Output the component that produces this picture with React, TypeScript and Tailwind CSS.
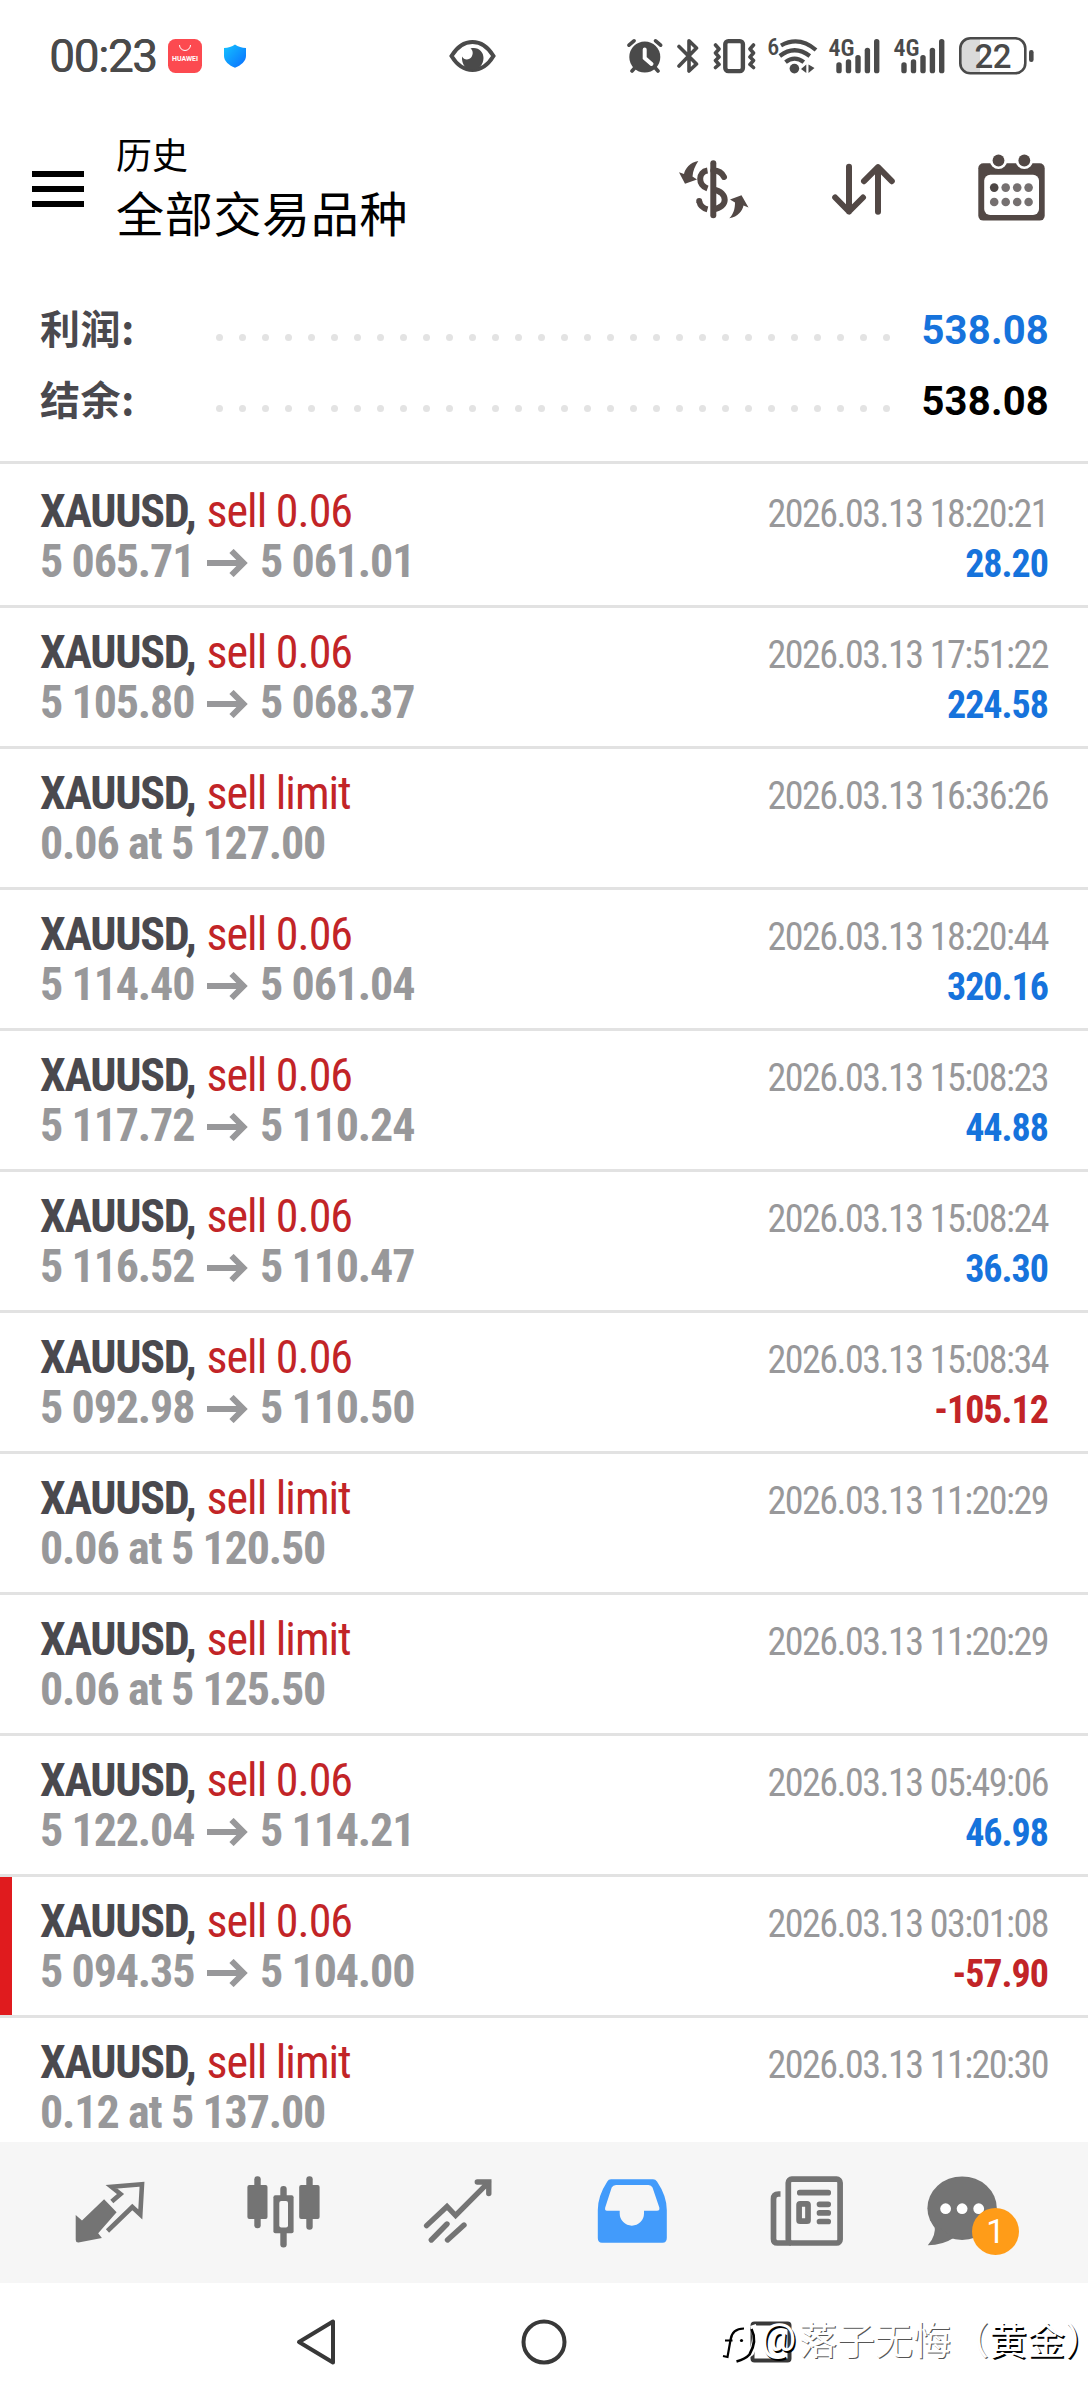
import type { ReactNode } from 'react';

interface Deal {
  action: string;
  open?: string;
  close?: string;
  order?: string;
  time: string;
  profit?: string;
  stopped?: boolean;
}

const deals: Deal[] = [
  { action: 'sell 0.06', open: '5 065.71', close: '5 061.01', time: '2026.03.13 18:20:21', profit: '28.20' },
  { action: 'sell 0.06', open: '5 105.80', close: '5 068.37', time: '2026.03.13 17:51:22', profit: '224.58' },
  { action: 'sell limit', order: '0.06 at 5 127.00', time: '2026.03.13 16:36:26' },
  { action: 'sell 0.06', open: '5 114.40', close: '5 061.04', time: '2026.03.13 18:20:44', profit: '320.16' },
  { action: 'sell 0.06', open: '5 117.72', close: '5 110.24', time: '2026.03.13 15:08:23', profit: '44.88' },
  { action: 'sell 0.06', open: '5 116.52', close: '5 110.47', time: '2026.03.13 15:08:24', profit: '36.30' },
  { action: 'sell 0.06', open: '5 092.98', close: '5 110.50', time: '2026.03.13 15:08:34', profit: '-105.12' },
  { action: 'sell limit', order: '0.06 at 5 120.50', time: '2026.03.13 11:20:29' },
  { action: 'sell limit', order: '0.06 at 5 125.50', time: '2026.03.13 11:20:29' },
  { action: 'sell 0.06', open: '5 122.04', close: '5 114.21', time: '2026.03.13 05:49:06', profit: '46.98' },
  { action: 'sell 0.06', open: '5 094.35', close: '5 104.00', time: '2026.03.13 03:01:08', profit: '-57.90', stopped: true },
  { action: 'sell limit', order: '0.12 at 5 137.00', time: '2026.03.13 11:20:30' },
];

function SignalIcon() {
  return (
    <svg width="51" height="36" viewBox="0 0 51 36" fill="#4a4a4a" className="overflow-visible">
      <text x="-0.5" y="17.8" fontSize="24" fontWeight="600" textLength="26" lengthAdjust="spacingAndGlyphs" className="font-['Roboto_Condensed',sans-serif]">
        4G
      </text>
      <rect x="7.3" y="24.3" width="5.4" height="11" rx="2.6" />
      <rect x="16.8" y="21.3" width="5.4" height="14" rx="2.6" />
      <rect x="26.3" y="17" width="5.4" height="18.3" rx="2.6" />
      <rect x="35.7" y="9.7" width="5.4" height="25.6" rx="2.6" />
      <rect x="45" y="1" width="5.4" height="34.3" rx="2.6" />
    </svg>
  );
}

function StatusBar() {
  return (
    <div className="relative flex h-[112px] items-center pr-[54px] pl-[49px] text-[#4a4a4a]">
      <span className="w-[119px] font-[Roboto] text-[46px] leading-none font-normal tracking-[-1.4px] [text-shadow:0.5px_0_0_#4a4a4a]">00:23</span>
      <svg width="34" height="34" viewBox="0 0 34 34">
        <rect width="34" height="34" rx="7.5" fill="#fc4a50" />
        <path d="M11.5 6 a5.5 5.5 0 0 0 11 0" fill="none" stroke="#fff" strokeWidth="1" />
        <text x="4" y="22" fontSize="7" fontWeight="700" fill="#fff" textLength="26" className="font-[Roboto]">
          HUAWEI
        </text>
      </svg>
      <svg width="22" height="24" viewBox="0 0 22 24" className="ml-[22px]">
        <defs>
          <linearGradient id="shield" x1="0" y1="0" x2="1" y2="1">
            <stop offset="0" stopColor="#14c4ff" />
            <stop offset="1" stopColor="#0a6cff" />
          </linearGradient>
        </defs>
        <path d="M11 0.5 C14 3 18 3.8 22 4 V12 C22 17 17 21.5 11 23.8 C5 21.5 0 17 0 12 V4 C4 3.8 8 3 11 0.5Z" fill="url(#shield)" />
      </svg>
      <svg width="47" height="34" viewBox="0 0 47 34" className="absolute top-[39px] left-[449px]">
        <path d="M2.5 17 C8 8 15 3 23.5 3 S39 8 44.5 17 C39 26 32 31 23.5 31 S8 26 2.5 17Z" fill="none" stroke="#4a4a4a" strokeWidth="4" />
        <path d="M21.5 9.5 C29 7.5 34.5 12.5 34.5 19 C34.5 25 30 31 23.5 31 C17 31 12.5 25.5 13 17.5 C15 21.5 20.5 21 22.5 18 C24.5 15 24 11 21.5 9.5Z" fill="#4a4a4a" />
      </svg>
      <div className="ml-auto flex items-center">
        <svg width="36" height="36" viewBox="0 0 36 36" fill="none" stroke="#4a4a4a" strokeLinecap="round">
          <circle cx="17.8" cy="19" r="15.5" fill="#4a4a4a" stroke="none" />
          <path d="M2 7.2 L7 2.8 M33.6 7.2 L28.6 2.8 M5 33 L9 28.5 M31 33 L27 28.5" strokeWidth="3.6" />
          <path d="M17.7 11.5 V20 L24.5 26" stroke="#fff" strokeWidth="4" />
        </svg>
        <svg width="22" height="36" viewBox="0 0 22 36" className="ml-[14px]" fill="none" stroke="#4a4a4a" strokeWidth="3.6" strokeLinecap="round" strokeLinejoin="round">
          <path d="M2 8.5 L19.5 26 L12 33 V2.8 L19.5 10 L2 28" />
        </svg>
        <svg width="43" height="36" viewBox="0 0 43 36" className="ml-[14px]" fill="none" stroke="#4a4a4a" strokeLinecap="round" strokeLinejoin="round">
          <rect x="12.3" y="3.1" width="17.6" height="30" rx="3" strokeWidth="4.4" />
          <path d="M2.5 7 L6 11 L2.5 15 L6 19 L2.5 22.5 L6 26.5 L2.5 29.5" strokeWidth="3.6" />
          <path d="M40.5 7 L37 11 L40.5 15 L37 19 L40.5 22.5 L37 26.5 L40.5 29.5" strokeWidth="3.6" />
        </svg>
        <svg width="49" height="36" viewBox="0 0 49 36" className="ml-3 overflow-visible" fill="none" stroke="#4a4a4a" strokeWidth="4.2">
          <text x="-0.8" y="16.5" fontSize="24" fontWeight="500" fill="#4a4a4a" stroke="none" className="font-['Roboto_Condensed',sans-serif]">
            6
          </text>
          <path d="M13 7.5 Q31 -2.5 48 12" />
          <path d="M11.8 18 Q26.5 6.5 41.8 18" />
          <path d="M17.5 24.2 Q26.5 17 35.8 24.2" />
          <circle cx="26.4" cy="30.6" r="4.8" fill="#4a4a4a" stroke="none" />
          <path d="M33 31 L38.3 26.5 V35Z M40.5 26.5 L46.5 30 L40.5 35Z" fill="#4a4a4a" stroke="none" />
        </svg>
        <div className="ml-3">
          <SignalIcon />
        </div>
        <div className="ml-[14px]">
          <SignalIcon />
        </div>
        <svg width="75" height="38" viewBox="0 0 75 38" className="ml-[14px]">
          <rect x="1.5" y="1.5" width="65" height="35" rx="10" fill="#fff" />
          <path d="M21 1.5 H11.5 a10 10 0 0 0 -10 10 V26.5 a10 10 0 0 0 10 10 H21Z" fill="#dadada" />
          <rect x="1.3" y="1.3" width="65" height="35" rx="10" fill="none" stroke="#4a4a4a" strokeWidth="2.6" />
          <rect x="70" y="13" width="4.6" height="12" rx="2.2" fill="#4a4a4a" />
          <text x="34" y="30.8" fontSize="33" fontWeight="500" textAnchor="middle" textLength="37" fill="#4a4a4a" className="font-[Roboto]">
            22
          </text>
        </svg>
      </div>
    </div>
  );
}

function Header() {
  return (
    <header className="flex h-[154px] items-center pr-[43px] pl-8">
      <div className="flex w-[52px] flex-col gap-[9px]">
        <span className="h-1.5 bg-black" />
        <span className="h-1.5 bg-black" />
        <span className="h-1.5 bg-black" />
      </div>
      <div className="mb-1 ml-8 flex flex-col text-black">
        <span className="text-[36px] leading-[48px]">历史</span>
        <span className="text-[48px] leading-[68px] tracking-[0.7px]">全部交易品种</span>
      </div>
      <div className="ml-auto flex items-center gap-[83px]">
        <svg width="71" height="61" viewBox="0 0 71 61" fill="none" stroke="#524845" strokeWidth="6">
          <path d="M35.3 4.3 V56.3" strokeLinecap="round" />
          <path d="M29.5 11.5 C20 13 19.5 26 29.5 29.5" />
          <path d="M35.3 11.5 Q43 11.5 46 18" strokeLinecap="round" />
          <path d="M21.3 42.5 Q22.5 48.5 29.5 50.3" />
          <circle cx="21.2" cy="42" r="3" fill="#524845" stroke="none" />
          <path d="M35.3 30.5 C50.5 33 50.5 48.5 35.3 50.3" />
          <path d="M20.3 2 C12 3 7 10 6 15 L1 13.2 L7 24.8 L19 20.5 L14.5 17.5 C15 11.5 17 7 20.3 2Z" fill="#524845" stroke="none" />
          <path d="M51.3 59.3 C60 58 64.5 51.5 65.5 46.5 L70.5 48.5 L63.5 36.2 L52 40.5 L57 43.5 C57 50 55.5 55 51.3 59.3Z" fill="#524845" stroke="none" />
        </svg>
        <svg width="63" height="53" viewBox="0 0 63 53" fill="none" stroke="#524845" strokeWidth="6" strokeLinecap="round" strokeLinejoin="round">
          <path d="M17 3.7 V48.5 M3.2 34.5 L17 48.5 L31 34.5" />
          <path d="M46 48.8 V4.2 M32 18.2 L46 4.2 L59.8 18.2" />
        </svg>
        <svg width="67" height="67" viewBox="0 0 67 67" className="mb-1">
          <rect x="0.3" y="9.2" width="66.4" height="57.4" rx="5" fill="#524845" />
          <rect x="6.2" y="20.7" width="54.8" height="40.3" rx="6" fill="#fff" />
          <circle cx="20.5" cy="6.5" r="8.6" fill="#fff" />
          <circle cx="46.3" cy="6.5" r="8.6" fill="#fff" />
          <circle cx="20.5" cy="6.5" r="5.9" fill="#524845" />
          <circle cx="46.3" cy="6.5" r="5.9" fill="#524845" />
          {[16.2, 27.7, 39.2, 50.6].map((x) => (
            <g key={x} fill="#757070">
              <circle cx={x} cy="33.6" r="4.3" fill={x < 20 ? '#4c4644' : '#757070'} />
              <circle cx={x} cy="48" r="4.3" />
            </g>
          ))}
        </svg>
      </div>
    </header>
  );
}

function SummaryRow({ label, value, valueClass }: { label: string; value: string; valueClass: string }) {
  return (
    <div className="flex h-[71px] items-center">
      <span className="mb-1.5 w-[176px] text-[40px] leading-[65px] font-bold tracking-[0.6px] text-[#4a494e]">{label}</span>
      <div className="mt-[14px] flex gap-4">
        {Array.from({ length: 30 }, (_, i) => (
          <span key={i} className="size-[7px] rounded-full bg-[#e3e3e3]" />
        ))}
      </div>
      <span className={`ml-auto font-[Roboto] text-[40px] leading-[71px] font-bold tracking-[0.2px] ${valueClass}`}>{value}</span>
    </div>
  );
}

function DealRow({ deal }: { deal: Deal }) {
  const negative = deal.profit?.startsWith('-');
  return (
    <div className="relative h-[141px] shrink-0 border-b-[3px] border-[#e2e2e2] pt-[19px] pr-10 pl-10 font-['Roboto_Condensed',sans-serif]">
      {deal.stopped && <span className="absolute top-0 left-0 h-[138px] w-3 bg-[#e01b1e]" />}
      <div className="flex h-[50px] items-baseline justify-between">
        <p className="text-[46px] leading-[50px]">
          <span className="font-bold tracking-[-1.3px] text-[#4a494e]">XAUUSD,</span>
          <span className="ml-[11px] tracking-[-1px] text-[#c22427]">{deal.action}</span>
        </p>
        <span className="text-[38px] leading-[50px] tracking-[-1.5px] text-[#98989a]">{deal.time}</span>
      </div>
      <div className="flex h-[50px] items-baseline justify-between">
        <p className="flex items-baseline text-[46px] leading-[50px] font-bold tracking-[-1.15px] text-[#98989a]">
          {deal.order ?? (
            <>
              <span className="w-[167px]">{deal.open}</span>
              <svg width="41" height="28" viewBox="0 0 41 28" fill="none" stroke="#98989a" strokeWidth="6" className="mb-0.5">
                <path d="M0 14 H37 M24.5 2 L36.5 14 L24.5 26" />
              </svg>
              <span className="ml-3">{deal.close}</span>
            </>
          )}
        </p>
        <span className={`text-[38px] leading-[50px] font-bold tracking-[-1px] ${negative ? 'text-[#c22427]' : 'text-[#1673dc]'}`}>
          {deal.profit}
        </span>
      </div>
    </div>
  );
}

function Tab({ children }: { children: ReactNode }) {
  return <div className="flex w-[174px] items-center justify-center">{children}</div>;
}

function TabBar() {
  return (
    <nav className="flex h-[141px] shrink-0 items-center bg-[#f6f6f6] pl-[22px]">
      <Tab>
        <svg width="88" height="89" viewBox="0 0 88 89">
          <path d="M46.8 33.5 L55.5 26 L46.5 18.8 L77 16.2 L75.3 46.5 L67.3 39 L42.5 63" fill="none" stroke="#747474" strokeWidth="4.6" />
          <path d="M39.1 31.3 L51.6 44.3 L33.2 65.3 L36.9 70 L13.5 74.5 Q10.8 74.6 10.7 72 V47 L17 52.5Z" fill="#747474" />
        </svg>
      </Tab>
      <Tab>
        <svg width="88" height="89" viewBox="0 0 88 89" fill="#747474">
          <rect x="15.3" y="8.3" width="6.4" height="52" rx="3" />
          <rect x="8.4" y="17" width="20.1" height="34" rx="2" />
          <rect x="41.3" y="18" width="6.4" height="61.5" rx="3" />
          <rect x="34.4" y="27.3" width="20.2" height="38" rx="2" />
          <rect x="40.3" y="33" width="8.7" height="26.5" rx="2" fill="#f6f6f6" />
          <rect x="67.3" y="8.3" width="6.4" height="53.5" rx="3" />
          <rect x="60.2" y="17" width="20.4" height="34" rx="2" />
        </svg>
      </Tab>
      <Tab>
        <svg width="88" height="89" viewBox="0 0 88 89" fill="none" stroke="#747474" strokeWidth="5.4" strokeLinecap="round">
          <path d="M13.6 57.6 L34 38.5 L42.6 47.5 L74 15.8" />
          <path d="M64.3 14 H75.8 V25.5 M75.8 14 L72 18" />
          <path d="M18.3 72 L34 56 M34.5 72 L51 57" />
        </svg>
      </Tab>
      <Tab>
        <svg width="88" height="89" viewBox="0 0 88 89">
          <path d="M24 11.3 H66 Q68.5 11.3 70 13.5 Q79.8 28 79.8 42 V70 Q79.8 74.7 75.5 74.7 H15 Q10.8 74.7 10.8 70 V42 Q10.8 28 20.3 13.5 Q21.5 11.3 24 11.3Z" fill="#429bfb" />
          <path d="M29 17 H61.5 Q64.3 17 65.5 19.5 L72.3 39.5 Q73 42.7 70 42.7 H57 V45.5 A12 12 0 0 1 32.7 45.5 V42.7 H20 Q17.5 42.7 18.2 39.5 L24.7 19.5 Q26 17 29 17Z" fill="#f6f6f6" />
        </svg>
      </Tab>
      <Tab>
        <svg width="88" height="89" viewBox="0 0 88 89" fill="none" stroke="#747474" strokeWidth="5.7" strokeLinecap="round">
          <rect x="27.3" y="11.2" width="51.8" height="63.8" rx="3.5" />
          <path d="M19.5 26 H17.5 Q12.5 26 12.5 31 V71 Q12.5 75 16.5 75 H30" strokeLinecap="butt" />
          <path d="M38.8 24.7 H67.2 M58.5 36.3 H67.2 M58.5 44.9 H67.2 M58.5 53.5 H67.2" />
          <rect x="38.1" y="35.8" width="8.9" height="17.4" rx="1" />
        </svg>
      </Tab>
      <Tab>
        <div className="relative w-[104px] shrink-0">
          <svg width="104" height="89" viewBox="0 0 104 89">
            <ellipse cx="35.1" cy="40.2" rx="34.7" ry="31.8" fill="#747474" />
            <path d="M7.5 56 Q9.5 68 0.8 77.3 Q16 77 26.5 70Z" fill="#747474" />
            <circle cx="18.6" cy="40.7" r="5.4" fill="#fff" />
            <circle cx="35.1" cy="40.7" r="5.4" fill="#fff" />
            <circle cx="51.7" cy="40.7" r="5.4" fill="#fff" />
          </svg>
          <span className="absolute top-10 left-[45px] flex size-[47px] items-center justify-center rounded-full bg-[#ff9c18] font-[Roboto] text-[33px] leading-none text-white">
            1
          </span>
        </div>
      </Tab>
    </nav>
  );
}

function SystemNav() {
  return (
    <div className="relative flex h-[117px] shrink-0 items-center justify-center gap-[180px]">
      <svg width="48" height="48" viewBox="0 0 48 48" fill="none" stroke="#383838" strokeWidth="4" strokeLinejoin="round">
        <path d="M7 24 L41 3.5 V44.5Z" />
      </svg>
      <svg width="48" height="48" viewBox="0 0 48 48" fill="none" stroke="#383838" strokeWidth="4">
        <circle cx="24" cy="24" r="20.5" />
      </svg>
      <svg width="48" height="48" viewBox="0 0 48 48" fill="none" stroke="#383838" strokeWidth="4">
        <rect x="4.5" y="5.5" width="37" height="37" rx="2" />
      </svg>
      {/* author mark over the system buttons */}
      <div className="absolute top-[28px] left-[720px] flex items-center whitespace-nowrap text-white">
        <svg width="41" height="46" viewBox="0 0 41 46" fill="none" className="mt-2">
          <path d="M6 39 L11 21 L16 12 H25 M33 6 Q38 20 31 34 L22 40" stroke="#fff" strokeWidth="6" />
          <path d="M3 37 L7.5 38 L10.5 21 Q12 9.5 24 9.5 M5 21.5 H12.5" stroke="#000" strokeWidth="2.2" />
          <circle cx="21.5" cy="21.5" r="1.6" fill="#000" />
          <path d="M31.5 10 Q37.5 22 29.5 35.5 Q25.5 40 16.5 42.5" stroke="#000" strokeWidth="2.6" />
        </svg>
        <span className="w-[38px] font-[Roboto] text-[39px] leading-[50px] font-medium [text-shadow:1.5px_1.5px_0_#000]">@</span>
        <span className="text-[38px] leading-[50px] [text-shadow:1px_1px_0_#555]">落子无悔</span>
        <span className="ml-[19px] text-[38px] leading-[50px] [font-feature-settings:'halt'] [text-shadow:1px_1px_0_#555]">（</span>
        <span className="text-[38px] leading-[50px] [font-feature-settings:'halt'] [text-shadow:1.5px_1.5px_0_#000]">黄金）</span>
      </div>
    </div>
  );
}

export default function App() {
  return (
    <div className="flex h-[2400px] w-[1088px] flex-col overflow-hidden bg-white font-['Noto_Sans_CJK_SC',sans-serif]">
      <StatusBar />
      <Header />
      <section className="border-b-[3px] border-[#e2e2e2] pt-[29px] pr-[39px] pb-6 pl-10">
        <SummaryRow label="利润:" value="538.08" valueClass="text-[#1673dc]" />
        <SummaryRow label="结余:" value="538.08" valueClass="text-black" />
      </section>
      <main className="flex min-h-0 flex-1 flex-col overflow-hidden pt-[3px]">
        {deals.map((deal, i) => (
          <DealRow key={i} deal={deal} />
        ))}
      </main>
      <TabBar />
      <SystemNav />
    </div>
  );
}
